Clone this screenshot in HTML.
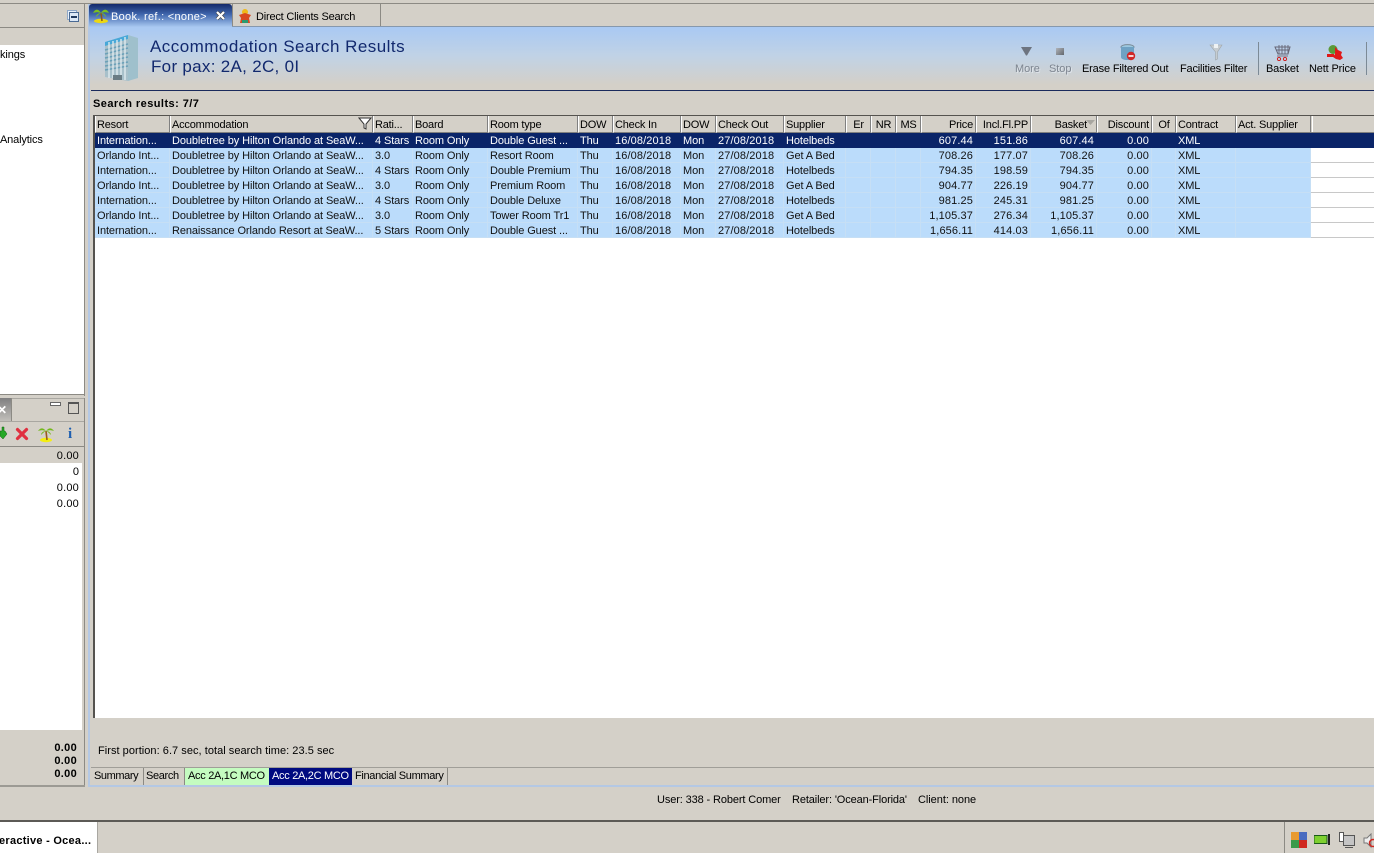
<!DOCTYPE html>
<html><head><meta charset="utf-8"><style>
html,body{margin:0;padding:0}
body{width:1374px;height:853px;overflow:hidden;background:#d4d0c8;position:relative;font:11px/13px "Liberation Sans",sans-serif;color:#000}
.a{position:absolute;white-space:nowrap}
table{position:absolute;left:95px;top:116px;border-collapse:separate;border-spacing:0;table-layout:fixed;width:1216px;font:11px/13px "Liberation Sans",sans-serif;letter-spacing:-.1px}
th{height:17px;padding:0 1px 0 1px;font-weight:normal;text-align:left;background:#d4d0c8;border-left:1px solid #fff;border-right:1px solid #808080;overflow:hidden;white-space:nowrap;box-sizing:border-box;vertical-align:bottom;border-bottom:1px solid #808080;letter-spacing:-.2px}
td{height:15px;padding:2px 2px 0 2px;background:#bbdcfb;overflow:hidden;white-space:nowrap;box-sizing:border-box;box-shadow:inset -1px -1px 0 #c6dff5;color:#111;vertical-align:top}
td:nth-child(7),td:nth-child(9),td:nth-child(14),td:nth-child(15),td:nth-child(16),td:nth-child(17){letter-spacing:.12px}
tr.s td{background:#0a2468;color:#fff;box-shadow:none}
.r{text-align:right;padding-right:3px}
th.r{padding-right:2px}
.g{color:#7d8590;text-shadow:1px 1px 0 #dfe4ea}
.l{position:absolute;left:1311px;width:63px;height:1px;background:#c8c8c8}
</style></head><body>
<!-- top line -->
<div class="a" style="left:0;top:3px;width:1374px;height:1px;background:#8c8a84"></div>

<!-- left upper panel -->
<div class="a" style="left:0;top:27px;width:85px;height:1px;background:#8c8a84"></div>
<div class="a" style="left:0;top:45px;width:84px;height:350px;background:#fff"></div>
<div class="a" style="left:84px;top:4px;width:1px;height:392px;background:#8c8a84"></div>
<div class="a" style="left:0;top:394px;width:85px;height:1px;background:#8c8a84"></div>
<svg class="a" style="left:66px;top:9px" width="14" height="14"><rect x="1.5" y="1.5" width="9" height="9" fill="#e8f0fa" stroke="#8fa8c8"/><rect x="3.5" y="3.500" width="9" height="9" fill="#dce8f6" stroke="#4a6a94"/><path d="M5 8h6" stroke="#203a60" stroke-width="2"/></svg>
<div class="a" style="left:0;top:49px;letter-spacing:-.1px">kings</div>
<div class="a" style="left:0;top:134px;letter-spacing:-.15px">Analytics</div>

<!-- left lower panel -->
<div class="a" style="left:0;top:398px;width:84px;height:1px;background:#a9a7a1"></div>
<div class="a" style="left:0;top:398px;width:11px;height:24px;background:linear-gradient(#7f7f80,#c4c2bd);border-right:1px solid #8c8a84"></div>
<div class="a" style="left:-3px;top:403px;color:#fff;font:bold 12px/14px 'Liberation Sans',sans-serif">✕</div>
<div class="a" style="left:0;top:421px;width:84px;height:1px;background:#a9a7a1"></div>
<div class="a" style="left:50px;top:402px;width:9px;height:2px;border:1px solid #666;background:#fff"></div>
<div class="a" style="left:68px;top:402px;width:9px;height:9px;border:1px solid #555;border-top-width:2px"></div>
<svg class="a" style="left:0;top:426px" width="8" height="15"><path d="M0 5h2V1h2v4h1l2 3-4 5-3-3z" fill="#26a826" stroke="#126012" stroke-width=".5"/></svg>
<svg class="a" style="left:15px;top:427px" width="14" height="14"><path d="M2.5 2.5l9 9M11.5 2.5l-9 9" stroke="#e03040" stroke-width="3.2" stroke-linecap="round"/></svg>
<svg class="a" style="left:37px;top:425px" width="18" height="18"><ellipse cx="9" cy="15" rx="6" ry="2.2" fill="#f4ee10"/><path d="M9 6l1 9" stroke="#9a5a1c" stroke-width="1.6"/><path d="M9 6C6 2 3 3 1 6c3-1 5-1 8 0zm0 0c3-4 6-3 8 0-3-1-5-1-8 0zM9 6C6 6 4 8 4 10c2-2 3-3 5-4zm0 0c3 0 5 2 5 4-2-2-3-3-5-4z" fill="#74b81c"/></svg>
<div class="a" style="left:68px;top:426px;color:#2060b0;font:bold 15px/16px 'Liberation Serif',serif">i</div>
<div class="a" style="left:0;top:446px;width:84px;height:1px;background:#8c8a84"></div>
<div class="a" style="left:0;top:463px;width:82px;height:267px;background:#fff"></div>
<div class="a" style="right:1296px;top:449px;letter-spacing:.2px;transform:translate(1px,1px)">0.00</div>
<div class="a" style="right:1296px;top:465px;transform:translate(1px,1px)">0</div>
<div class="a" style="right:1296px;top:481px;letter-spacing:.2px;transform:translate(1px,1px)">0.00</div>
<div class="a" style="right:1296px;top:497px;letter-spacing:.2px;transform:translate(1px,1px)">0.00</div>
<div class="a" style="right:1298px;top:742px;font-weight:bold;letter-spacing:.3px;transform:translateX(1px)">0.00</div>
<div class="a" style="right:1298px;top:755px;font-weight:bold;letter-spacing:.3px;transform:translateX(1px)">0.00</div>
<div class="a" style="right:1298px;top:768px;font-weight:bold;letter-spacing:.3px;transform:translateX(1px)">0.00</div>
<div class="a" style="left:84px;top:398px;width:1px;height:388px;background:#8c8a84"></div>
<div class="a" style="left:0;top:785px;width:85px;height:2px;background:#9c9a94"></div>

<!-- right panel frame -->
<div class="a" style="left:88px;top:4px;width:2px;height:783px;background:#b4c8e4"></div>
<div class="a" style="left:88px;top:785px;width:1286px;height:2px;background:#b4c8e4"></div>
<div class="a" style="left:90px;top:26px;width:1284px;height:1px;background:#8698ac"></div>

<!-- tabs -->
<div class="a" style="left:89px;top:4px;width:143px;height:23px;background:linear-gradient(#14296a,#3f66ad 45%,#a9c9f1);border-radius:3px 3px 0 0"></div>
<div class="a" style="left:232px;top:4px;width:149px;height:22px;border-right:1px solid #8c8a84;border-left:1px solid #8c8a84;box-sizing:border-box"></div>
<svg class="a" style="left:92px;top:6px" width="18" height="18"><ellipse cx="9" cy="15" rx="7" ry="2.2" fill="#ecd812"/><path d="M9 7l1 8" stroke="#8a5a1c" stroke-width="1.6"/><path d="M9 7C6 2 3 3 1 7c3-1 5-1 8 0zm0 0c3-5 6-4 8 0-3-1-5-1-8 0zM9 7C6 7 4 9 4 11c2-2 3-3 5-4zm0 0c3 0 5 2 5 4-2-2-3-3-5-4z" fill="#7cc01e"/></svg>
<div class="a" style="left:111px;top:11px;color:#fff;letter-spacing:.3px">Book. ref.: &lt;none&gt;</div>
<svg class="a" style="left:215px;top:10px" width="11" height="11"><path d="M2 2l7 7M9 2l-7 7" stroke="#444" stroke-width="3.4"/><path d="M2 2l7 7M9 2l-7 7" stroke="#fff" stroke-width="2.2"/></svg>
<svg class="a" style="left:237px;top:8px" width="16" height="16"><circle cx="8" cy="4" r="3" fill="#f0b818"/><path d="M2 7l6-2 6 2-2 3 1 5H3l1-5z" fill="#d84820"/><path d="M5 12h6v3H5z" fill="#2a9a70"/></svg>
<div class="a" style="left:256px;top:11px;letter-spacing:-.2px">Direct Clients Search</div>

<!-- banner -->
<div class="a" style="left:90px;top:27px;width:1284px;height:63px;background:linear-gradient(#a9c9f3,#c0d2e6 45%,#d4d0c8 92%)"></div>
<div class="a" style="left:91px;top:90px;width:1283px;height:1px;background:#1a2a5c"></div>
<svg class="a" style="left:103px;top:33px" width="36" height="50"><path d="M2 9L25 2v46L2 44z" fill="#a8c0ca"/><path d="M25 2l10 3v40l-10 3z" fill="#9fc0cc"/><path d="M2 9L25 2v4L2 13z" fill="#48a8d8"/><g stroke="#6aa0b8" stroke-width="1.500"><path d="M2 17l23-6M2 21l23-6M2 25l23-5M2 29l23-5M2 33l23-4M2 37l23-4"/></g><g stroke="#e4eef2" stroke-width="1.300"><path d="M6 9v36M10 8v37M14 7v39M18 6v41M22 4v43"/></g><path d="M10 42h9v5h-9z" fill="#6a7c84"/></svg>
<div class="a" style="left:150px;top:37px;font:17px/19px 'Liberation Sans',sans-serif;color:#12296e;letter-spacing:.47px">Accommodation Search Results</div>
<div class="a" style="left:151px;top:57px;font:17px/19px 'Liberation Sans',sans-serif;color:#12296e;letter-spacing:.3px">For pax: 2A, 2C, 0I</div>

<!-- toolbar -->
<svg class="a" style="left:1021px;top:47px" width="12" height="9"><path d="M0 0h11L6 8.500H5z" fill="#6d7480"/></svg>
<div class="a" style="left:1056px;top:48px;width:8px;height:7px;background:linear-gradient(135deg,#b0b4ba,#62666c)"></div>
<svg class="a" style="left:1120px;top:44px" width="16" height="18"><ellipse cx="7.500" cy="3" rx="6.500" ry="2.400" fill="#9cc8e0" stroke="#7a8a96"/><path d="M1 3v10c0 2 3 3 6.500 3S14 15 14 13V3" fill="#6fa2c4"/><circle cx="11" cy="12" r="4.200" fill="#d02828"/><path d="M8.500 12h5" stroke="#fff" stroke-width="1.600"/></svg>
<svg class="a" style="left:1209px;top:43px" width="14" height="18"><path d="M1 2h12L8.500 9v7l-2 1V9z" fill="#c6ccd0" stroke="#9ea6aa" stroke-width=".6"/><path d="M5 1h4v4H5z" fill="#eef2f4"/></svg>
<div class="a g" style="left:1015px;top:63px;letter-spacing:-.05px">More</div>
<div class="a g" style="left:1049px;top:63px;letter-spacing:-.05px">Stop</div>
<div class="a" style="left:1082px;top:63px;letter-spacing:-.16px">Erase Filtered Out</div>
<div class="a" style="left:1180px;top:63px;letter-spacing:-.18px">Facilities Filter</div>
<div class="a" style="left:1258px;top:42px;width:1px;height:33px;background:#7c8a96"></div>
<svg class="a" style="left:1273px;top:43px" width="18" height="18"><path d="M2 4h15l-2 7H5z" fill="none" stroke="#667"/><path d="M6 2v9M9 2v9M12 2v9M15 2v9M3 7h13" stroke="#667" stroke-width=".9"/><path d="M4 13h11" stroke="#778"/><circle cx="6" cy="16" r="1.6" fill="none" stroke="#d02020"/><circle cx="12" cy="16" r="1.6" fill="none" stroke="#d02020"/></svg>
<div class="a" style="left:1266px;top:63px;letter-spacing:-.15px">Basket</div>
<svg class="a" style="left:1326px;top:44px" width="18" height="18"><circle cx="7" cy="5.500" r="4.500" fill="#5a9a38"/><path d="M1 10h7v3H1z" fill="#e01818"/><path d="M9 3l3 3 4 2-1 3 2 3-3 2-4-1-3-2 2-3z" fill="#e01818"/></svg>
<div class="a" style="left:1309px;top:63px;letter-spacing:-.15px">Nett Price</div>
<div class="a" style="left:1366px;top:42px;width:1px;height:33px;background:#7c8a96"></div>

<div class="a" style="left:93px;top:98px;font-weight:bold;letter-spacing:.45px">Search results: 7/7</div>

<!-- table area -->
<div class="a" style="left:93px;top:115px;width:1281px;height:603px;background:#fff;border-top:1px solid #55534f;border-left:2px solid #55534f;box-sizing:border-box"></div>
<div class="a" style="left:95px;top:116px;width:1279px;height:17px;background:#d4d0c8;border-bottom:1px solid #808080;box-sizing:border-box"></div>
<div class="a" style="left:1312px;top:116px;width:62px;height:16px;border-left:1px solid #fff;box-sizing:border-box"></div>
<div class="a" style="left:95px;top:133px;width:1279px;height:15px;background:#0a2468"></div>
<div class="l" style="top:162px"></div><div class="l" style="top:177px"></div><div class="l" style="top:192px"></div><div class="l" style="top:207px"></div><div class="l" style="top:222px"></div><div class="l" style="top:237px"></div>

<table>
<colgroup><col style="width:75px"><col style="width:203px"><col style="width:40px"><col style="width:75px"><col style="width:90px"><col style="width:35px"><col style="width:68px"><col style="width:35px"><col style="width:68px"><col style="width:62px"><col style="width:25px"><col style="width:25px"><col style="width:25px"><col style="width:55px"><col style="width:55px"><col style="width:66px"><col style="width:55px"><col style="width:24px"><col style="width:60px"><col style="width:75px"></colgroup>
<tr><th>Resort</th><th>Accommodation</th><th>Rati...</th><th>Board</th><th>Room type</th><th>DOW</th><th>Check In</th><th>DOW</th><th>Check Out</th><th>Supplier</th><th style="text-align:center">Er</th><th style="text-align:center">NR</th><th style="text-align:center">MS</th><th class="r">Price</th><th class="r">Incl.Fl.PP</th><th class="r" style="padding-right:9px">Basket</th><th class="r">Discount</th><th style="text-align:center">Of</th><th>Contract</th><th>Act. Supplier</th></tr>
<tr class="s"><td>Internation...</td><td>Doubletree by Hilton Orlando at SeaW...</td><td>4 Stars</td><td>Room Only</td><td>Double Guest ...</td><td>Thu</td><td>16/08/2018</td><td>Mon</td><td>27/08/2018</td><td>Hotelbeds</td><td></td><td></td><td></td><td class="r">607.44</td><td class="r">151.86</td><td class="r">607.44</td><td class="r">0.00</td><td></td><td>XML</td><td></td></tr>
<tr><td>Orlando Int...</td><td>Doubletree by Hilton Orlando at SeaW...</td><td>3.0</td><td>Room Only</td><td>Resort Room</td><td>Thu</td><td>16/08/2018</td><td>Mon</td><td>27/08/2018</td><td>Get A Bed</td><td></td><td></td><td></td><td class="r">708.26</td><td class="r">177.07</td><td class="r">708.26</td><td class="r">0.00</td><td></td><td>XML</td><td></td></tr>
<tr><td>Internation...</td><td>Doubletree by Hilton Orlando at SeaW...</td><td>4 Stars</td><td>Room Only</td><td>Double Premium</td><td>Thu</td><td>16/08/2018</td><td>Mon</td><td>27/08/2018</td><td>Hotelbeds</td><td></td><td></td><td></td><td class="r">794.35</td><td class="r">198.59</td><td class="r">794.35</td><td class="r">0.00</td><td></td><td>XML</td><td></td></tr>
<tr><td>Orlando Int...</td><td>Doubletree by Hilton Orlando at SeaW...</td><td>3.0</td><td>Room Only</td><td>Premium Room</td><td>Thu</td><td>16/08/2018</td><td>Mon</td><td>27/08/2018</td><td>Get A Bed</td><td></td><td></td><td></td><td class="r">904.77</td><td class="r">226.19</td><td class="r">904.77</td><td class="r">0.00</td><td></td><td>XML</td><td></td></tr>
<tr><td>Internation...</td><td>Doubletree by Hilton Orlando at SeaW...</td><td>4 Stars</td><td>Room Only</td><td>Double Deluxe</td><td>Thu</td><td>16/08/2018</td><td>Mon</td><td>27/08/2018</td><td>Hotelbeds</td><td></td><td></td><td></td><td class="r">981.25</td><td class="r">245.31</td><td class="r">981.25</td><td class="r">0.00</td><td></td><td>XML</td><td></td></tr>
<tr><td>Orlando Int...</td><td>Doubletree by Hilton Orlando at SeaW...</td><td>3.0</td><td>Room Only</td><td>Tower Room Tr1</td><td>Thu</td><td>16/08/2018</td><td>Mon</td><td>27/08/2018</td><td>Get A Bed</td><td></td><td></td><td></td><td class="r">1,105.37</td><td class="r">276.34</td><td class="r">1,105.37</td><td class="r">0.00</td><td></td><td>XML</td><td></td></tr>
<tr><td>Internation...</td><td>Renaissance Orlando Resort at SeaW...</td><td>5 Stars</td><td>Room Only</td><td>Double Guest ...</td><td>Thu</td><td>16/08/2018</td><td>Mon</td><td>27/08/2018</td><td>Hotelbeds</td><td></td><td></td><td></td><td class="r">1,656.11</td><td class="r">414.03</td><td class="r">1,656.11</td><td class="r">0.00</td><td></td><td>XML</td><td></td></tr>
</table>
<svg class="a" style="left:358px;top:117px" width="14" height="13"><path d="M1 1h12L8 7v5L6 11V7z" fill="#fff" stroke="#333"/></svg>
<svg class="a" style="left:1086px;top:120px" width="9" height="6"><path d="M0 0h9L4.500 5z" fill="#a8a6a0"/></svg>

<!-- bottom -->
<div class="a" style="left:98px;top:745px;letter-spacing:.04px">First portion: 6.7 sec, total search time: 23.5 sec</div>
<div class="a" style="left:91px;top:767px;width:1283px;height:1px;background:#a09e98"></div>
<div class="a" style="left:143px;top:768px;width:1px;height:17px;background:#8c8a84"></div>
<div class="a" style="left:184px;top:768px;width:1px;height:17px;background:#8c8a84"></div>
<div class="a" style="left:185px;top:768px;width:84px;height:17px;background:#c4fcc0"></div>
<div class="a" style="left:269px;top:768px;width:83px;height:17px;background:#000a80"></div>
<div class="a" style="left:447px;top:768px;width:1px;height:17px;background:#8c8a84"></div>
<div class="a" style="left:94px;top:770px;letter-spacing:-.4px">Summary</div>
<div class="a" style="left:146px;top:770px;letter-spacing:-.35px">Search</div>
<div class="a" style="left:188px;top:770px;letter-spacing:-.3px">Acc 2A,1C MCO</div>
<div class="a" style="left:272px;top:770px;color:#fff;letter-spacing:-.3px">Acc 2A,2C MCO</div>
<div class="a" style="left:355px;top:770px;letter-spacing:-.33px">Financial Summary</div>

<div class="a" style="left:657px;top:794px;letter-spacing:-.12px">User: 338 - Robert Comer</div>
<div class="a" style="left:792px;top:794px;letter-spacing:-.12px">Retailer: 'Ocean-Florida'</div>
<div class="a" style="left:918px;top:794px;letter-spacing:-.05px">Client: none</div>

<!-- taskbar -->
<div class="a" style="left:0;top:820px;width:1374px;height:2px;background:#5c5a56"></div>
<div class="a" style="left:0;top:822px;width:98px;height:31px;background:#fff;border-right:1px solid #a9a7a1;box-sizing:border-box"></div>
<div class="a" style="left:-1px;top:835px;font-weight:bold;letter-spacing:.27px">eractive - Ocea...</div>
<div class="a" style="left:1284px;top:822px;width:1px;height:31px;background:#8c8a84"></div>
<svg class="a" style="left:1291px;top:832px" width="16" height="16"><rect width="8" height="8" fill="#e89a30"/><rect x="8" width="8" height="8" fill="#4a6cc0"/><rect y="8" width="8" height="8" fill="#3a9a4a"/><rect x="8" y="8" width="8" height="8" fill="#d02820"/></svg>
<svg class="a" style="left:1314px;top:834px" width="17" height="12"><rect y="1.500" width="13" height="8" fill="#7ed030" stroke="#1a5a1a"/><path d="M15 0v11" stroke="#222" stroke-width="2"/></svg>
<svg class="a" style="left:1339px;top:832px" width="16" height="16"><rect x="4.500" y="3.500" width="11" height="10" fill="#c4c4c4" stroke="#555"/><rect x=".5" y=".5" width="4" height="9" fill="#fff" stroke="#555"/><path d="M6 15.500h8" stroke="#555"/></svg>
<svg class="a" style="left:1363px;top:833px" width="11" height="16"><path d="M1 5h3l4-4v13L4 10H1z" fill="#eee" stroke="#777"/><circle cx="10" cy="10" r="3.500" fill="none" stroke="#d02820" stroke-width="1.500"/></svg>
</body></html>
